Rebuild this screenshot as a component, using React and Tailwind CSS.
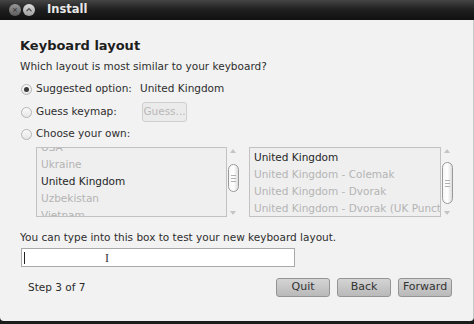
import React from 'react';

const font = { fontFamily: '"DejaVu Sans", "Liberation Sans", sans-serif' };

function Radio({ checked }) {
  return (
    <span className="flex h-[11px] w-[11px] shrink-0 items-center justify-center rounded-full border border-[#b5b5b5] bg-gradient-to-b from-[#fafafa] to-[#e6e6e6]">
      {checked && <span className="h-[5px] w-[5px] rounded-full bg-[#3a3a3a]" />}
    </span>
  );
}

function Scrollbar({ top, thumb }) {
  return (
    <div className="flex w-[12px] flex-col items-center">
      <span className="mt-[2px] h-0 w-0 border-x-[3px] border-b-[4px] border-x-transparent border-b-[#c4c4c4]" />
      <div style={{ height: top }} />
      <div
        className="flex w-[11px] flex-col items-center justify-center gap-[2px] rounded-[6px] border border-[#9a9a9a] bg-gradient-to-r from-[#f6f6f6] via-[#ffffff] to-[#dcdcdc]"
        style={{ height: thumb }}
      >
        <span className="h-px w-[5px] bg-[#b0b0b0]" />
        <span className="h-px w-[5px] bg-[#b0b0b0]" />
        <span className="h-px w-[5px] bg-[#b0b0b0]" />
      </div>
      <div className="flex-1" />
      <span className="mb-[2px] h-0 w-0 border-x-[3px] border-t-[4px] border-x-transparent border-t-[#c4c4c4]" />
    </div>
  );
}

function Button({ children }) {
  return (
    <button className="h-[19px] w-[54px] rounded-[3px] border border-[#949494] bg-gradient-to-b from-[#d4d4d4] to-[#b9b9b9] text-[11px] text-[#333333]">
      {children}
    </button>
  );
}

export default function App() {
  return (
    <div className="flex h-[324px] w-[474px] flex-col overflow-hidden bg-[#1c1c1c]" style={font}>
      {/* Title bar */}
      <div className="flex h-[20px] items-center bg-gradient-to-b from-[#454545] via-[#1e1e1e] to-[#111111] pl-[9px]">
        <span className="flex h-[12px] w-[12px] items-center justify-center rounded-full bg-gradient-to-b from-[#9a9a9a] to-[#5c5c5c] text-[7px] leading-none text-[#2a2a2a]">×</span>
        <span className="ml-[2px] flex h-[12px] w-[12px] items-center justify-center rounded-full bg-gradient-to-b from-[#e0e0e0] to-[#9c9c9c]">
          <svg width="8" height="8" viewBox="0 0 8 8"><path d="M1.5 5.2 L4 2.8 L6.5 5.2" stroke="#555" strokeWidth="1.4" fill="none" /></svg>
        </span>
        <span className="ml-[12px] text-[11.5px] font-bold text-[#e8e8e8]">Install</span>
      </div>

      {/* Body */}
      <div className="flex flex-1 flex-col rounded-b-[4px] border-r border-[#c8c8c8] bg-[#f2f2f2] px-[20px] text-[#2e2e2e]">
        <div className="mt-[17px] h-[17px] text-[13px] font-bold leading-[17px] text-[#1e1e1e]">Keyboard layout</div>
        <div className="mt-[5px] h-[14px] text-[10.5px] leading-[14px]">Which layout is most similar to your keyboard?</div>

        <div className="mt-[8px] flex h-[16px] items-center whitespace-nowrap pl-[1px] text-[10.5px]">
          <Radio checked />
          <span className="ml-[4px] w-[104px] shrink-0">Suggested option:</span>
          <span>United Kingdom</span>
        </div>
        <div className="mt-[5px] flex h-[20px] items-center whitespace-nowrap pl-[1px] text-[10.5px]">
          <Radio />
          <span className="ml-[4px] w-[106px] shrink-0">Guess keymap:</span>
          <span className="flex h-[20px] w-[45px] items-center justify-center rounded-[3px] border border-[#cfcfcf] bg-[#ebebeb] text-[#b8b8b8]">Guess...</span>
        </div>
        <div className="mt-[4px] flex h-[16px] items-center whitespace-nowrap pl-[1px] text-[10.5px]">
          <Radio />
          <span className="ml-[4px]">Choose your own:</span>
        </div>

        {/* Lists */}
        <div className="mt-[5px] flex h-[70px]">
          <div className="ml-[16px] flex w-[193px] flex-col overflow-hidden border border-[#c2c2c2] bg-[#efefef] pl-[4px] text-[10.5px] leading-[17px] text-[#b4b4b4]">
            <div className="-mt-[9px]">USA</div>
            <div>Ukraine</div>
            <div className="text-[#262626]">United Kingdom</div>
            <div>Uzbekistan</div>
            <div>Vietnam</div>
          </div>
          <Scrollbar top={11} thumb={28} />
          <div className="ml-[10px] flex w-[194px] flex-col overflow-hidden border border-[#c2c2c2] bg-[#efefef] pl-[4px] pt-[1px] text-[10.5px] leading-[17px] text-[#b4b4b4]">
            <div className="text-[#262626]">United Kingdom</div>
            <div>United Kingdom - Colemak</div>
            <div>United Kingdom - Dvorak</div>
            <div className="whitespace-nowrap">United Kingdom - Dvorak (UK Punctuation)</div>
          </div>
          <Scrollbar top={9} thumb={42} />
        </div>

        <div className="mt-[13px] h-[14px] text-[10.5px] leading-[14px]">You can type into this box to test your new keyboard layout.</div>
        <div className="ml-[1px] mt-[4px] flex h-[19px] w-[274px] items-center border border-[#a9a9a9] bg-white pl-[2px]">
          <span className="h-[12px] w-px bg-[#222]" />
          <span className="ml-[80px] text-[12px] leading-none text-[#333]" style={{ fontFamily: '"Liberation Serif", serif' }}>I</span>
        </div>

        <div className="mt-[11px] flex items-center">
          <span className="ml-[8px] text-[10.5px] text-[#2a2a2a]">Step 3 of 7</span>
          <div className="ml-auto mr-[1px] flex gap-[7px]">
            <Button>Quit</Button>
            <Button>Back</Button>
            <Button>Forward</Button>
          </div>
        </div>
      </div>
      <div className="h-[3px] bg-[#1c1c1c]" />
    </div>
  );
}
